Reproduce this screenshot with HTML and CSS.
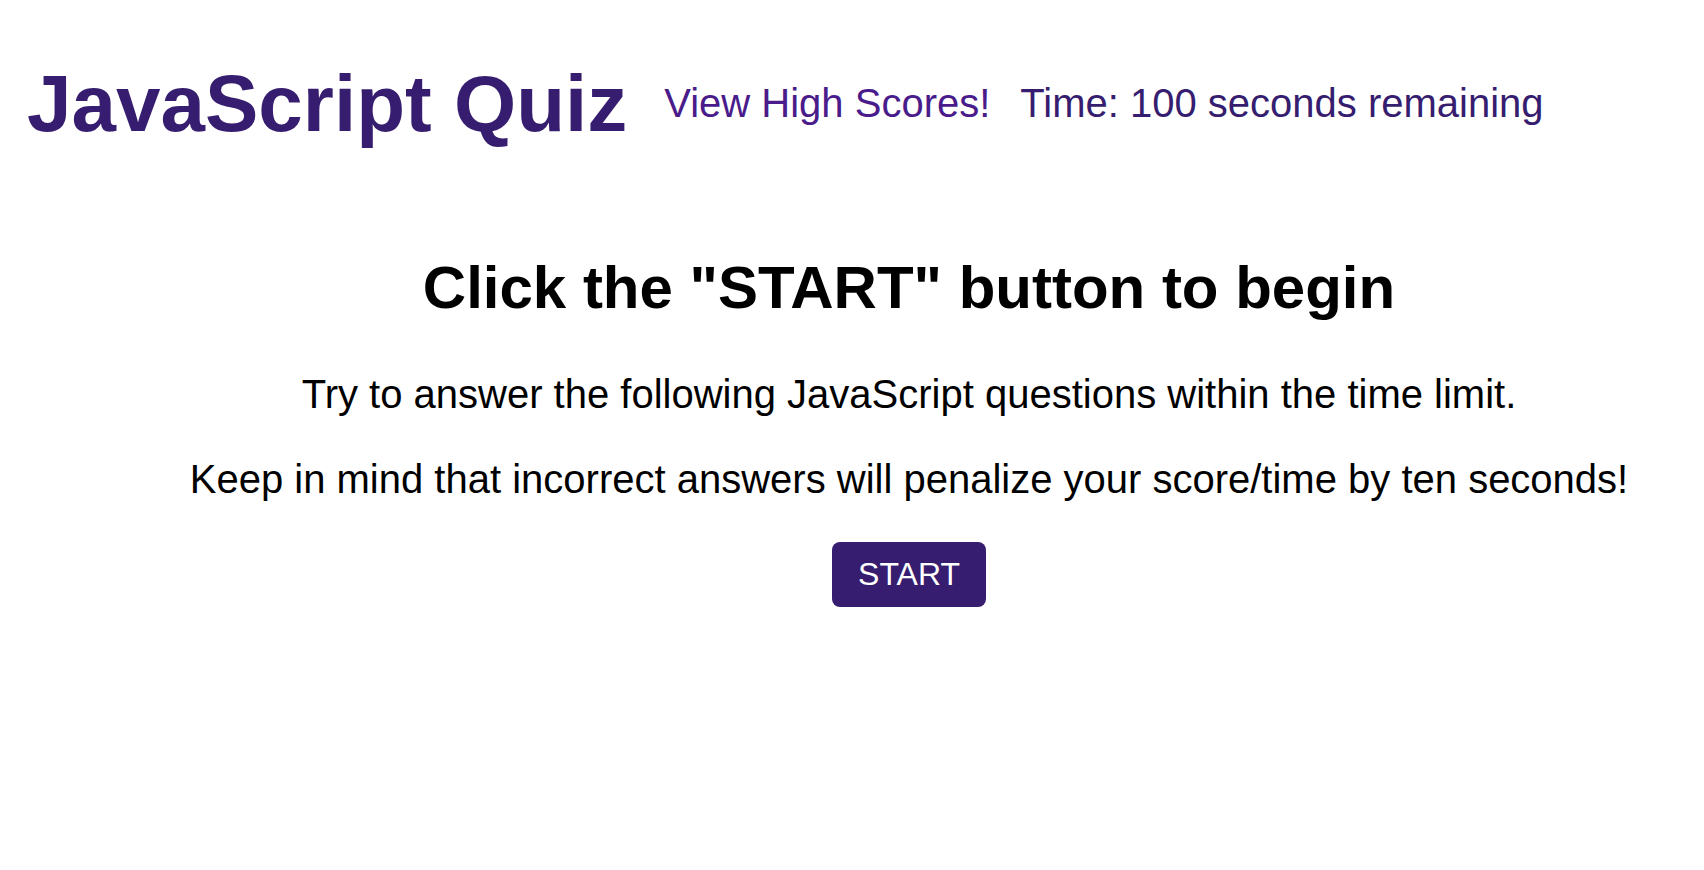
FILE: index.html
```html
<!DOCTYPE html>
<html lang="en">
<head>
<meta charset="utf-8">
<title>JavaScript Quiz</title>
<link rel="stylesheet" href="styles.css">
</head>
<body>
<header class="header">
  <h1 class="title">JavaScript Quiz</h1>
  <a class="scores" href="#">View High Scores!</a>
  <span class="timer">Time: 100 seconds remaining</span>
</header>
<main class="main">
  <h2 class="heading">Click the "START" button to begin</h2>
  <p class="text">Try to answer the following JavaScript questions within the time limit.</p>
  <p class="text">Keep in mind that incorrect answers will penalize your score/time by ten seconds!</p>
  <button class="start" type="button">START</button>
</main>
</body>
</html>
```
FILE: styles.css
```css
body {
  margin: 8px;
  font-family: "Liberation Sans", Arial, Helvetica, sans-serif;
  color: #000;
  background: #fff;
}
.header {
  display: flex;
  align-items: center;
  padding-left: 19px;
}
.title {
  font-size: 80px;
  font-weight: bold;
  color: #361d6f;
  margin: 50px 0 55px 0;
}
.scores {
  font-size: 40px;
  color: #4a1b8b;
  text-decoration: none;
  margin-left: 37px;
  margin-bottom: 6px;
}
.timer {
  font-size: 40px;
  color: #361d6f;
  margin-left: 30px;
  margin-bottom: 6px;
}
.main {
  padding-left: 114px;
  text-align: center;
}
.heading {
  font-size: 60px;
  font-weight: bold;
  margin: 48px 0 50px 0;
}
.text {
  font-size: 40px;
  margin: 40px 0;
}
.start {
  font-family: "Liberation Sans", Arial, Helvetica, sans-serif;
  font-size: 32px;
  color: #fff;
  background: #361d6f;
  border: none;
  border-radius: 8px;
  padding: 14px 26px;
  cursor: pointer;
}
```
